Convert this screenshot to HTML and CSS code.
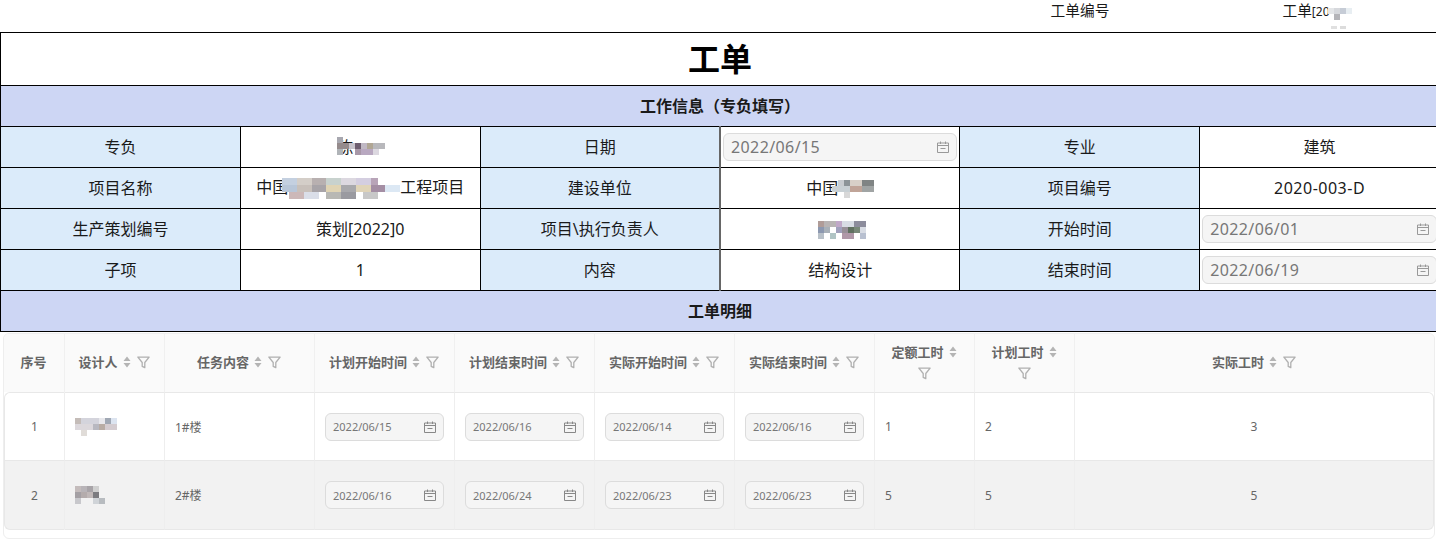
FILE: index.html
```html
<!DOCTYPE html>
<html lang="zh-CN">
<head>
<meta charset="utf-8">
<title>工单</title>
<link rel="stylesheet" href="styles.css">
</head>
<body>
<svg class="defs" width="0" height="0" aria-hidden="true">
  <defs>
    <symbol id="cal" viewBox="0 0 14 14">
      <path d="M1.5 3h11v9.5h-11zM1.5 5.5h11M4.5 1.5v2.5M9.5 1.5v2.5M4.5 8.5h5" fill="none" stroke="currentColor" stroke-width="1"/>
    </symbol>
    <symbol id="sort" viewBox="0 0 8 12">
      <path d="M4 0.5L7.5 5h-7zM4 11.5L0.5 7h7z" fill="currentColor"/>
    </symbol>
    <symbol id="filter" viewBox="0 0 12 12">
      <path d="M0.8 1h10.4L7.2 6v4.8L4.8 9.6V6z" fill="none" stroke="currentColor" stroke-width="1.2" stroke-linejoin="round"/>
    </symbol>
  </defs>
</svg>
<div class="page">
  <div class="top-row">
    <span class="top-cell">工单编号</span>
    <span class="top-cell">工单<span class="top-small">[20</span><svg class="mosaic top-mosaic" width="30" height="27" viewBox="0 0 10 9" shape-rendering="crispEdges"><rect x="0" y="0" width="2" height="2" fill="#e4e6e8"/><rect x="2" y="0" width="2" height="2" fill="#d6d8dc"/><rect x="4" y="0" width="2" height="2" fill="#c6ccd6"/><rect x="6" y="0" width="2" height="2" fill="#e8eef2"/><rect x="2" y="2" width="2" height="2" fill="#b4b4b8"/><rect x="1" y="6" width="2" height="1" fill="#e0e0e0"/><rect x="4" y="6" width="2" height="1" fill="#dcdcdc"/></svg></span>
  </div>
  <table class="sheet">
    <tbody>
      <tr><td class="title" colspan="6">工单</td></tr>
      <tr><td class="section" colspan="6">工作信息（专负填写）</td></tr>
      <tr>
        <td class="label">专负</td>
        <td>陈<svg class="mosaic name-mosaic" width="48" height="18" viewBox="0 0 8 3" shape-rendering="crispEdges"><rect x="0" y="0" width="1" height="1" fill="#a8a8b0"/><rect x="0" y="1" width="2" height="1" fill="#958b8c"/><rect x="2" y="1" width="1" height="1" fill="#c8c4cc"/><rect x="3" y="1" width="1" height="1" fill="#6e5e70"/><rect x="4" y="1" width="1" height="1" fill="#c0b8c4"/><rect x="5" y="1" width="1" height="1" fill="#b0a694"/><rect x="6" y="1" width="2" height="1" fill="#b8b8bc"/><rect x="0" y="2" width="1" height="1" fill="#b0b4b8"/><rect x="3" y="2" width="1" height="1" fill="#a898a8"/><rect x="4" y="2" width="2" height="1" fill="#b8a8c0"/><rect x="6" y="2" width="1" height="1" fill="#dcd8e0"/></svg></td>
        <td class="label">日期</td>
        <td class="date-cell"><span class="date-input">2022/06/15<svg class="cal"><use href="#cal"/></svg></span></td>
        <td class="label">专业</td>
        <td>建筑</td>
      </tr>
      <tr>
        <td class="label">项目名称</td>
        <td>中国<svg class="mosaic project-mosaic" width="118" height="21" viewBox="0 0 16 3" preserveAspectRatio="none" shape-rendering="crispEdges"><rect x="0" y="0" width="2" height="1" fill="#c4d0e0"/><rect x="2" y="0" width="2" height="1" fill="#d4cec8"/><rect x="4" y="0" width="2" height="1" fill="#b8b0b0"/><rect x="6" y="0" width="2" height="1" fill="#c8d2ce"/><rect x="8" y="0" width="2" height="1" fill="#dcd8e0"/><rect x="10" y="0" width="2" height="1" fill="#d4cee0"/><rect x="12" y="0" width="1" height="1" fill="#b8a4b8"/><rect x="0" y="1" width="2" height="1" fill="#b8c6d8"/><rect x="2" y="1" width="2" height="1" fill="#c8c0ba"/><rect x="4" y="1" width="2" height="1" fill="#a8a4a8"/><rect x="6" y="1" width="2" height="1" fill="#e0d4b4"/><rect x="8" y="1" width="2" height="1" fill="#a8a8ac"/><rect x="10" y="1" width="2" height="1" fill="#e0d4b8"/><rect x="12" y="1" width="2" height="1" fill="#a48ea4"/><rect x="14" y="1" width="2" height="1" fill="#dce8f4"/><rect x="1" y="2" width="2" height="1" fill="#ccb8b8"/><rect x="3" y="2" width="2" height="1" fill="#dadee8"/><rect x="6" y="2" width="2" height="1" fill="#b8b8b4"/><rect x="8" y="2" width="2" height="1" fill="#9a9aa0"/><rect x="11" y="2" width="2" height="1" fill="#c8c8c8"/></svg>工程项目</td>
        <td class="label">建设单位</td>
        <td>中国<svg class="mosaic client-mosaic" width="42" height="18" viewBox="0 0 7 3" shape-rendering="crispEdges"><rect x="1" y="0" width="1" height="1" fill="#c8ccd0"/><rect x="2" y="0" width="1" height="1" fill="#8c9498"/><rect x="3" y="0" width="2" height="1" fill="#d8d0c8"/><rect x="5" y="0" width="2" height="1" fill="#808484"/><rect x="0" y="1" width="3" height="1" fill="#c8d0d4"/><rect x="3" y="1" width="2" height="1" fill="#c0a498"/><rect x="5" y="1" width="2" height="1" fill="#a0a4a4"/><rect x="2" y="2" width="1" height="1" fill="#d8d8d8"/></svg></td>
        <td class="label">项目编号</td>
        <td class="num">2020-003-D</td>
      </tr>
      <tr>
        <td class="label">生产策划编号</td>
        <td>策划[2022]0</td>
        <td class="label">项目\执行负责人</td>
        <td><svg class="mosaic lead-mosaic" width="48" height="18" viewBox="0 0 8 3" shape-rendering="crispEdges"><rect x="0" y="0" width="1" height="1" fill="#b09c98"/><rect x="1" y="0" width="2" height="1" fill="#b8b4b4"/><rect x="3" y="0" width="1" height="1" fill="#c0a8c8"/><rect x="4" y="0" width="2" height="1" fill="#d8dce4"/><rect x="6" y="0" width="2" height="1" fill="#8c8c9c"/><rect x="0" y="1" width="1" height="1" fill="#8c98b0"/><rect x="1" y="1" width="1" height="1" fill="#a8b0b8"/><rect x="3" y="1" width="1" height="1" fill="#a0a0bc"/><rect x="4" y="1" width="1" height="1" fill="#989098"/><rect x="5" y="1" width="1" height="1" fill="#607060"/><rect x="6" y="1" width="1" height="1" fill="#788878"/><rect x="7" y="1" width="1" height="1" fill="#d8dce4"/><rect x="0" y="2" width="1" height="1" fill="#b8c0c8"/><rect x="2" y="2" width="1" height="1" fill="#b0c4c4"/><rect x="4" y="2" width="2" height="1" fill="#b098a8"/><rect x="7" y="2" width="1" height="1" fill="#b8c0d0"/></svg></td>
        <td class="label">开始时间</td>
        <td class="date-cell"><span class="date-input">2022/06/01<svg class="cal"><use href="#cal"/></svg></span></td>
      </tr>
      <tr>
        <td class="label">子项</td>
        <td>1</td>
        <td class="label">内容</td>
        <td>结构设计</td>
        <td class="label">结束时间</td>
        <td class="date-cell"><span class="date-input">2022/06/19<svg class="cal"><use href="#cal"/></svg></span></td>
      </tr>
      <tr><td class="section sub" colspan="6">工单明细</td></tr>
    </tbody>
  </table>
  <div class="detail">
    <table class="grid-table">
      <colgroup>
        <col class="c61"><col class="c100"><col class="c150"><col class="c140"><col class="c140"><col class="c140"><col class="c140"><col class="c100"><col class="c100"><col>
      </colgroup>
      <thead>
        <tr>
          <th>序号</th>
          <th>设计人<svg class="sort"><use href="#sort"/></svg><svg class="filter"><use href="#filter"/></svg></th>
          <th>任务内容<svg class="sort"><use href="#sort"/></svg><svg class="filter"><use href="#filter"/></svg></th>
          <th>计划开始时间<svg class="sort"><use href="#sort"/></svg><svg class="filter"><use href="#filter"/></svg></th>
          <th>计划结束时间<svg class="sort"><use href="#sort"/></svg><svg class="filter"><use href="#filter"/></svg></th>
          <th>实际开始时间<svg class="sort"><use href="#sort"/></svg><svg class="filter"><use href="#filter"/></svg></th>
          <th>实际结束时间<svg class="sort"><use href="#sort"/></svg><svg class="filter"><use href="#filter"/></svg></th>
          <th class="wrap">定额工时<svg class="sort"><use href="#sort"/></svg><br><svg class="filter solo"><use href="#filter"/></svg></th>
          <th class="wrap">计划工时<svg class="sort"><use href="#sort"/></svg><br><svg class="filter solo"><use href="#filter"/></svg></th>
          <th>实际工时<svg class="sort"><use href="#sort"/></svg><svg class="filter"><use href="#filter"/></svg></th>
        </tr>
      </thead>
      <tbody>
        <tr>
          <td class="center">1</td>
          <td><svg class="mosaic" width="42" height="18" viewBox="0 0 7 3" shape-rendering="crispEdges"><rect x="0" y="0" width="1" height="1" fill="#c4bcb8"/><rect x="1" y="0" width="3" height="1" fill="#d4d4dc"/><rect x="4" y="0" width="1" height="1" fill="#e8e8ec"/><rect x="5" y="0" width="1" height="1" fill="#a0a8b4"/><rect x="6" y="0" width="1" height="1" fill="#dce4f0"/><rect x="0" y="1" width="3" height="1" fill="#dcd8dc"/><rect x="3" y="1" width="1" height="1" fill="#b8b8c0"/><rect x="4" y="1" width="1" height="1" fill="#b8aca4"/><rect x="5" y="1" width="2" height="1" fill="#d4ccd0"/><rect x="1" y="2" width="1" height="1" fill="#e0dcd8"/></svg></td>
          <td>1#楼</td>
          <td><span class="mini-date">2022/06/15<svg class="cal small"><use href="#cal"/></svg></span></td>
          <td><span class="mini-date">2022/06/16<svg class="cal small"><use href="#cal"/></svg></span></td>
          <td><span class="mini-date">2022/06/14<svg class="cal small"><use href="#cal"/></svg></span></td>
          <td><span class="mini-date">2022/06/16<svg class="cal small"><use href="#cal"/></svg></span></td>
          <td>1</td>
          <td>2</td>
          <td class="center">3</td>
        </tr>
        <tr class="alt">
          <td class="center">2</td>
          <td><svg class="mosaic" width="30" height="18" viewBox="0 0 5 3" shape-rendering="crispEdges"><rect x="0" y="0" width="1" height="1" fill="#c4bcbc"/><rect x="1" y="0" width="1" height="1" fill="#b8b4b8"/><rect x="2" y="0" width="1" height="1" fill="#a8a4a8"/><rect x="3" y="0" width="1" height="1" fill="#d0d0d0"/><rect x="0" y="1" width="1" height="1" fill="#a4a0a4"/><rect x="1" y="1" width="1" height="1" fill="#b4acac"/><rect x="2" y="1" width="1" height="1" fill="#c0b8b8"/><rect x="3" y="1" width="1" height="1" fill="#7c7c80"/><rect x="0" y="2" width="1" height="1" fill="#c8c8cc"/><rect x="3" y="2" width="1" height="1" fill="#d0d4d8"/><rect x="4" y="2" width="1" height="1" fill="#b8bcc0"/></svg></td>
          <td>2#楼</td>
          <td><span class="mini-date">2022/06/16<svg class="cal small"><use href="#cal"/></svg></span></td>
          <td><span class="mini-date">2022/06/24<svg class="cal small"><use href="#cal"/></svg></span></td>
          <td><span class="mini-date">2022/06/23<svg class="cal small"><use href="#cal"/></svg></span></td>
          <td><span class="mini-date">2022/06/23<svg class="cal small"><use href="#cal"/></svg></span></td>
          <td>5</td>
          <td>5</td>
          <td class="center">5</td>
        </tr>
      </tbody>
    </table>
  </div>
</div>
</body>
</html>
```
FILE: styles.css
```css
* { box-sizing: border-box; }
html, body { margin: 0; padding: 0; overflow: hidden; height: 541px; background: #fff; }
body { font-family: "Noto Sans", "Noto Sans CJK SC", sans-serif; color: #1a1a1a; font-size: 16px; }
.defs { position: absolute; }
.page { width: 1440px; }

.top-row { display: grid; grid-template-columns: 240px 240px; justify-content: end; height: 32px; }
.top-cell { text-align: center; font-size: 14.7px; line-height: 20px; white-space: nowrap; }
.top-small { font-size: 12px; }
.top-mosaic { vertical-align: top; margin: 6px 0 -13px -2px; }

.sheet { width: 1440px; table-layout: fixed; border-collapse: collapse; }
.sheet td { border: 1px solid #000; height: 41px; padding: 0; text-align: center; font-size: 16px; line-height: 20px; vertical-align: middle; overflow: hidden; white-space: nowrap; }
.sheet td:nth-child(4) { border-left: 2px solid #666; }
.sheet .title { height: 53px; font-size: 32px; font-weight: 700; color: #000; }
.sheet .section { background: #cdd6f4; font-weight: 700; }
.sheet .label { background: #dbebfa; }
.sheet .date-cell { padding: 0 0 0 2px; }
.sheet .num { letter-spacing: 0.5px; }
.mosaic { display: inline-block; vertical-align: middle; }
.name-mosaic { margin: -6px -2px 0 -16px; }
.project-mosaic { margin: -2px 0 0 -6px; }
.client-mosaic { margin: -2px 0 0 -6px; }
.lead-mosaic { margin-left: 4px; }

.date-input { display: flex; align-items: center; justify-content: space-between; height: 28px; margin-right: 2px; padding: 0 6px 0 7px; background: #f5f5f5; border: 1px solid #dcdcdc; border-radius: 6px; color: #777; letter-spacing: 0.4px; }
.cal { width: 14px; height: 14px; color: #999; flex: none; }

.detail { margin: 1px 1px 0 3px; height: 206px; border: 1px solid #eee; border-radius: 6px; width: 1432px; }
.grid-table { width: 1430px; table-layout: fixed; border-collapse: separate; border-spacing: 0; }
.c61 { width: 61px; }
.c100 { width: 100px; }
.c150 { width: 150px; }
.c140 { width: 140px; }
.grid-table th { height: 58px; padding: 0 11px 2px 10px; background: #fafafa; color: #666; font-size: 13px; font-weight: 700; line-height: 19px; text-align: center; border-right: 1px solid #f0f0f0; }
.grid-table th:first-child { border-top-left-radius: 5px; }
.grid-table th:last-child { border-top-right-radius: 5px; border-right: 0; }
.grid-table td { padding: 0 10px; height: 69px; font-size: 12px; color: #666; border-right: 1px solid #eee; border-bottom: 1px solid #e8e8e8; background: #fff; }
.grid-table tbody tr:first-child td { border-top: 1px solid #e8e8e8; }
.grid-table td:last-child { border-right: 1px solid #e8e8e8; }
.grid-table td:first-child { border-left: 1px solid #e8e8e8; }
.grid-table tbody tr:first-child td:first-child { border-top-left-radius: 6px; }
.grid-table tbody tr:first-child td:last-child { border-top-right-radius: 6px; }
.grid-table tbody tr:last-child td:first-child { border-bottom-left-radius: 6px; }
.grid-table tbody tr:last-child td:last-child { border-bottom-right-radius: 6px; }
.grid-table .alt td { background: #f2f2f2; }
.grid-table .center { text-align: center; }
.sort { width: 8px; height: 12px; margin-left: 5px; vertical-align: -1px; color: #b4b4b4; }
.filter { width: 13px; height: 13px; margin-left: 6px; vertical-align: -2px; color: #b0b0b0; }
.filter.solo { margin-left: 0; vertical-align: top; margin-top: 5px; }

.mini-date { display: flex; align-items: center; justify-content: space-between; height: 28px; padding: 0 6px 0 7px; background: #f5f5f5; border: 1px solid #dcdcdc; border-radius: 6px; color: #777; font-size: 11px; }
.cal.small { width: 14px; height: 14px; color: #888; }
```
